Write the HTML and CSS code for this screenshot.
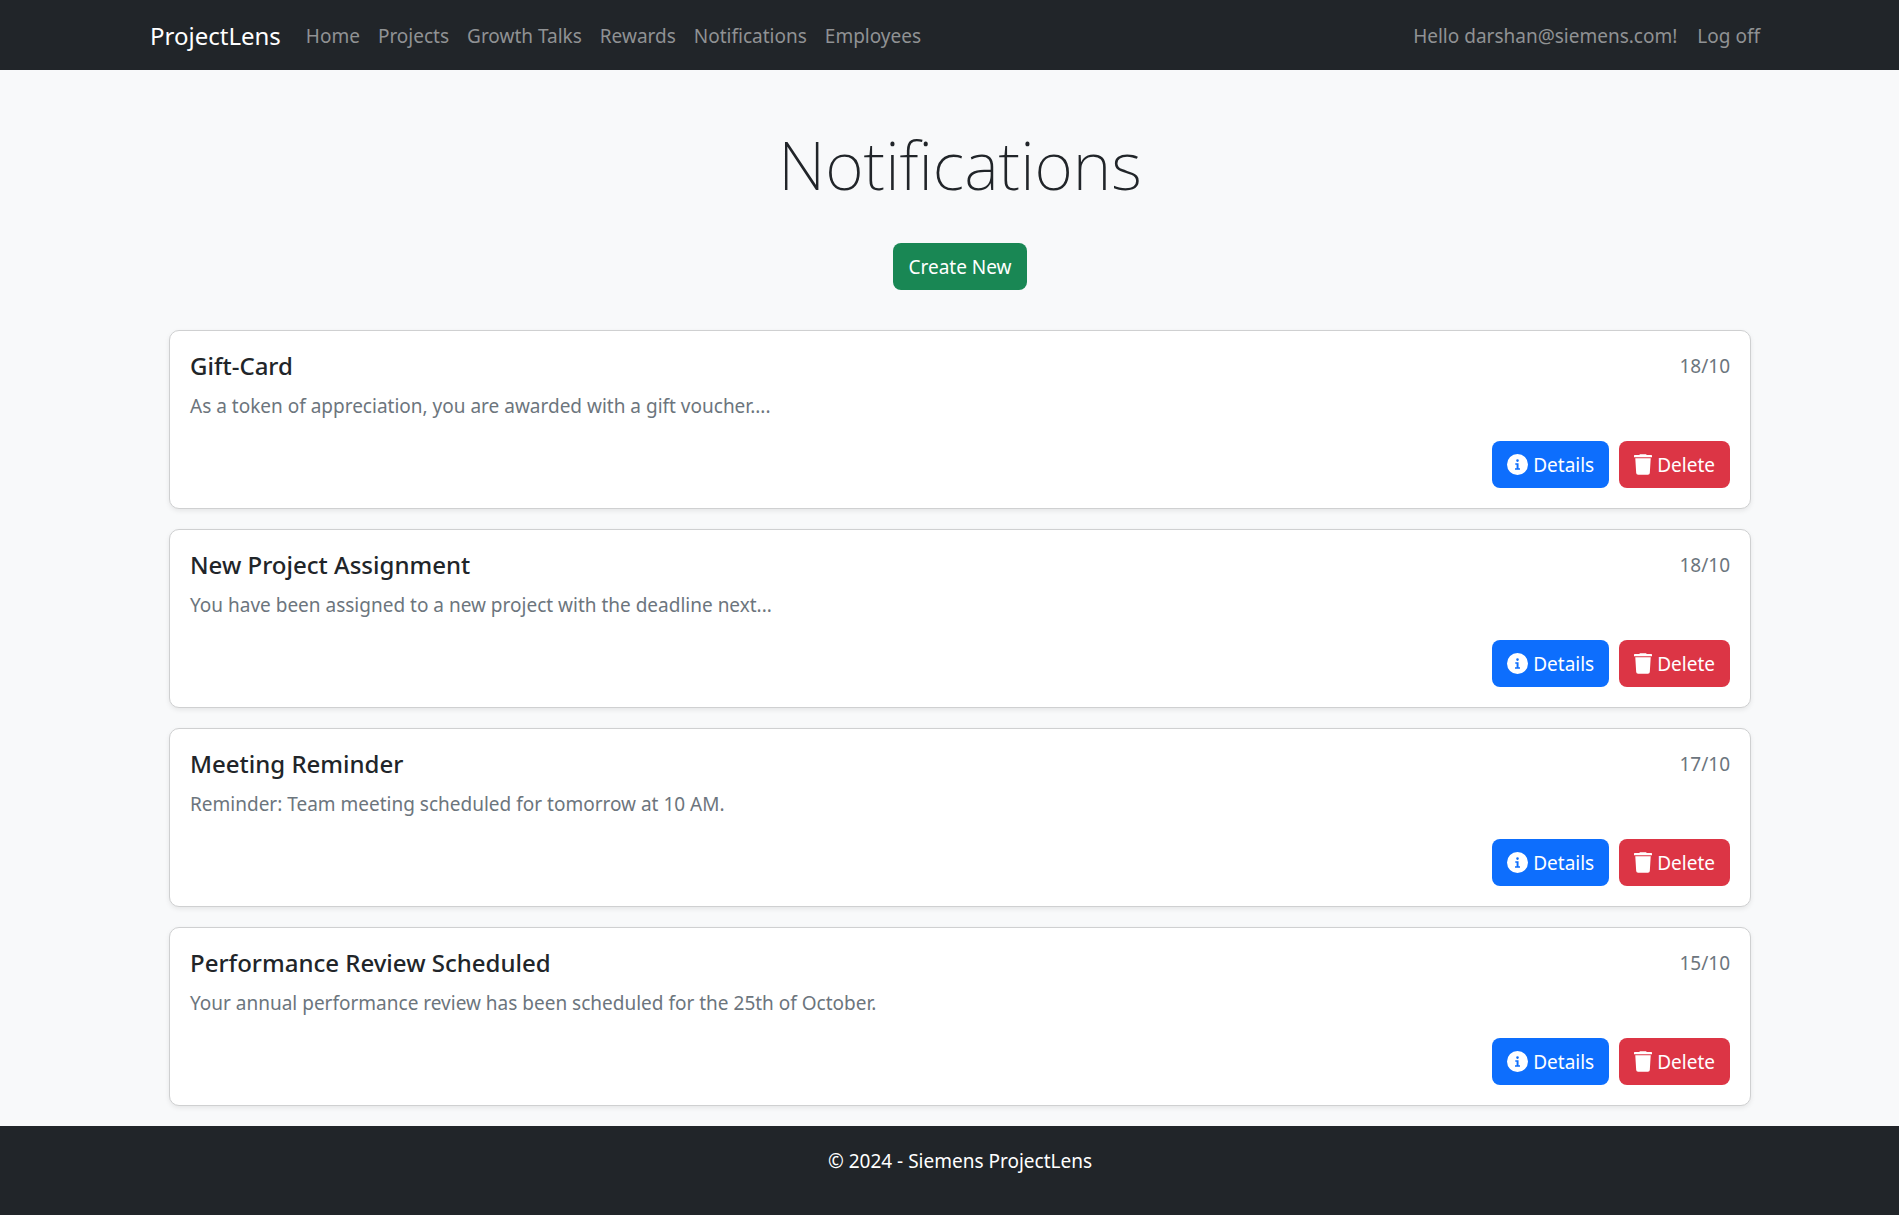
FILE: index.html
```html
<!DOCTYPE html>
<html lang="en">
<head>
<meta charset="utf-8">
<meta name="viewport" content="width=device-width, initial-scale=1">
<title>Notifications - ProjectLens</title>
<link rel="stylesheet" href="styles.css">
</head>
<body>
<svg class="sprite" aria-hidden="true">
  <symbol id="icon-info" viewBox="0 0 16 16"><path d="M8 16A8 8 0 1 0 8 0a8 8 0 0 0 0 16zM6.300 7h2.500v3.800h1.100V12H6.100v-1.200h1.200V8.200h-1zM8 4a1 1 0 1 1 0 2 1 1 0 0 1 0-2z" fill-rule="evenodd"/></symbol>
  <symbol id="icon-trash" viewBox="0 0 14 16"><path d="M4.2.6 4.500 0h5l.3.6h3.700a.5.5 0 0 1 .5.5v1.300H0V1.100a.5.5 0 0 1 .5-.5zM1 3.200h12l-.7 11.400A1.500 1.500 0 0 1 10.800 16H3.200a1.500 1.500 0 0 1-1.500-1.400z"/></symbol>
</svg>
<header class="navbar">
  <nav class="container navbar-inner" aria-label="Main">
    <a class="brand" href="#">ProjectLens</a>
    <ul class="nav nav-main">
      <li><a href="#">Home</a></li>
      <li><a href="#">Projects</a></li>
      <li><a href="#">Growth Talks</a></li>
      <li><a href="#">Rewards</a></li>
      <li><a href="#">Notifications</a></li>
      <li><a href="#">Employees</a></li>
    </ul>
    <ul class="nav nav-end">
      <li><a href="#">Hello darshan@siemens.com!</a></li>
      <li><a href="#">Log off</a></li>
    </ul>
  </nav>
</header>
<main class="container content">
  <h1>Notifications</h1>
  <a class="btn btn-success" href="#">Create New</a>
  <div class="cards">
    <article class="card">
      <div class="card-head"><h2>Gift-Card</h2><span class="date">18/10</span></div>
      <p>As a token of appreciation, you are awarded with a gift voucher....</p>
      <div class="actions">
        <button type="button" class="btn btn-primary"><svg class="icon-info" aria-hidden="true"><use href="#icon-info"/></svg>Details</button>
        <button type="button" class="btn btn-danger"><svg class="icon-trash" aria-hidden="true"><use href="#icon-trash"/></svg>Delete</button>
      </div>
    </article>
    <article class="card">
      <div class="card-head"><h2>New Project Assignment</h2><span class="date">18/10</span></div>
      <p>You have been assigned to a new project with the deadline next...</p>
      <div class="actions">
        <button type="button" class="btn btn-primary"><svg class="icon-info" aria-hidden="true"><use href="#icon-info"/></svg>Details</button>
        <button type="button" class="btn btn-danger"><svg class="icon-trash" aria-hidden="true"><use href="#icon-trash"/></svg>Delete</button>
      </div>
    </article>
    <article class="card">
      <div class="card-head"><h2>Meeting Reminder</h2><span class="date">17/10</span></div>
      <p>Reminder: Team meeting scheduled for tomorrow at 10 AM.</p>
      <div class="actions">
        <button type="button" class="btn btn-primary"><svg class="icon-info" aria-hidden="true"><use href="#icon-info"/></svg>Details</button>
        <button type="button" class="btn btn-danger"><svg class="icon-trash" aria-hidden="true"><use href="#icon-trash"/></svg>Delete</button>
      </div>
    </article>
    <article class="card">
      <div class="card-head"><h2>Performance Review Scheduled</h2><span class="date">15/10</span></div>
      <p>Your annual performance review has been scheduled for the 25th of October.</p>
      <div class="actions">
        <button type="button" class="btn btn-primary"><svg class="icon-info" aria-hidden="true"><use href="#icon-info"/></svg>Details</button>
        <button type="button" class="btn btn-danger"><svg class="icon-trash" aria-hidden="true"><use href="#icon-trash"/></svg>Delete</button>
      </div>
    </article>
  </div>
</main>
<footer class="footer">
  <p class="container">© 2024 - Siemens ProjectLens</p>
</footer>
</body>
</html>
```
FILE: styles.css
```css
* { box-sizing: border-box; }

body {
  display: flex;
  flex-direction: column;
  min-height: 100vh;
  margin: 0;
  background: #f8f9fa;
  color: #212529;
  font-family: "Segoe UI", "Noto Sans", "Open Sans", sans-serif;
  font-size: 19px;
  line-height: 30px;
}

h1, h2, p, ul { margin: 0; padding: 0; }

a { color: inherit; text-decoration: none; }

.sprite { display: none; }

.container {
  width: 100%;
  max-width: 1650px;
  margin: 0 auto;
  padding: 0 15px;
}

/* Page bands share one left gutter so their containers line up */
.navbar, .footer { padding-left: 21px; background: #212529; }

.navbar-inner {
  display: flex;
  align-items: center;
  min-height: 70px;
  padding-top: 2px;
}

.brand { margin-right: 16px; color: #fff; font-size: 24px; }

.nav { display: flex; list-style: none; color: #909294; }
.nav a { display: block; padding: 10px; }
.nav-main a { padding: 10px 9px; }
.nav-end { margin-left: auto; }

.content {
  display: flex;
  flex-direction: column;
  align-items: center;
  max-width: 1671px;
  padding: 52px 34px 20px 55px;
}

h1 {
  margin-bottom: 37px;
  font-size: 66px;
  font-weight: 200;
  line-height: 84px;
}

.btn {
  display: inline-flex;
  align-items: center;
  gap: 5px;
  height: 47px;
  padding: 0 15px;
  border: 0;
  border-radius: 8px;
  color: #fff;
  font: inherit;
  cursor: pointer;
}

.btn svg { height: 21px; fill: currentColor; }
.btn .icon-info { width: 21px; }
.btn .icon-trash { width: 18px; }
.btn-success { background: #198754; }
.btn-primary { background: #0d6efd; }
.btn-danger { background: #dc3545; }

.cards {
  display: flex;
  flex-direction: column;
  gap: 20px;
  width: 100%;
  margin-top: 40px;
}

.card {
  padding: 20px;
  border: 1px solid #cfd0d1;
  border-radius: 10px;
  background: #fff;
  box-shadow: 0 2px 5px rgba(0, 0, 0, 0.08);
}

.card-head { display: flex; justify-content: space-between; margin-bottom: 10px; }
.card h2 { font-size: 24px; font-weight: 500; line-height: 30px; }
.card p { margin-bottom: 20px; }
.card p, .date { color: #6c757d; }

.actions { display: flex; justify-content: flex-end; gap: 10px; }

.footer { flex: 1; padding-top: 20px; color: #fff; text-align: center; }
```
